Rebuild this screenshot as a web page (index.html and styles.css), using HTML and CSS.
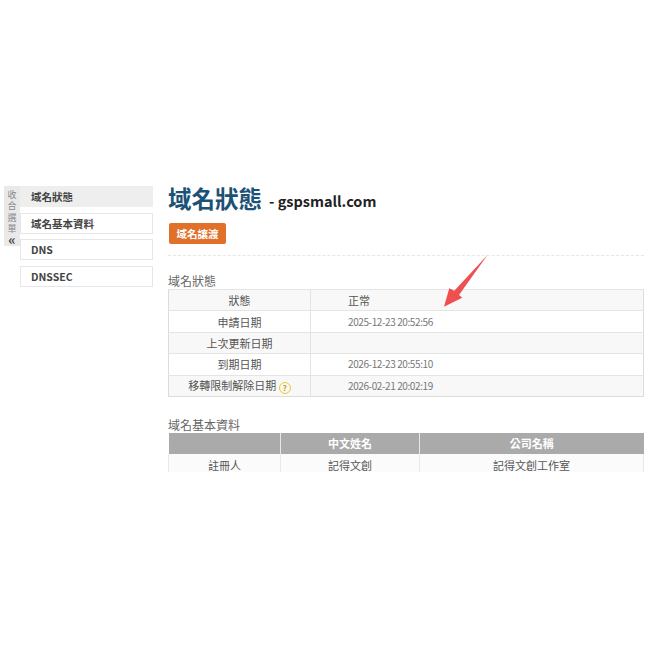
FILE: index.html
```html
<!DOCTYPE html>
<html lang="zh-Hant">

<head>
    <meta charset="UTF-8">
    <meta name="viewport" content="width=device-width, initial-scale=1.0">
    <title>域名狀態</title>
    <link rel="stylesheet" href="styles.css">
</head>

<body>
    <div class="page">
        <div class="toggle">
            <span>收</span>
            <span>合</span>
            <span>選</span>
            <span>單</span>
            <span class="toggle-arrows">«</span>
        </div>

        <ul class="side-menu">
            <li class="active">域名狀態</li>
            <li>域名基本資料</li>
            <li>DNS</li>
            <li>DNSSEC</li>
        </ul>

        <div class="main">
            <div class="title-row">
                <h1>域名狀態</h1>
                <span class="domain">- gspsmall.com</span>
            </div>
            <div class="actions">
                <button class="btn-orange">域名讓渡</button>
            </div>

            <div class="section-label first">域名狀態</div>
            <table class="status-table">
                <tr>
                    <td class="name">狀態</td>
                    <td class="value status-text">正常</td>
                </tr>
                <tr>
                    <td class="name">申請日期</td>
                    <td class="value">2025-12-23 20:52:56</td>
                </tr>
                <tr>
                    <td class="name">上次更新日期</td>
                    <td class="value"></td>
                </tr>
                <tr>
                    <td class="name">到期日期</td>
                    <td class="value">2026-12-23 20:55:10</td>
                </tr>
                <tr>
                    <td class="name">移轉限制解除日期 <span class="help">?</span></td>
                    <td class="value">2026-02-21 20:02:19</td>
                </tr>
            </table>

            <div class="section-label second">域名基本資料</div>
            <div class="info-wrap">
                <table class="info-table">
                    <tr>
                        <th class="col-a"></th>
                        <th class="col-b">中文姓名</th>
                        <th>公司名稱</th>
                    </tr>
                    <tr>
                        <td>註冊人</td>
                        <td>記得文創</td>
                        <td>記得文創工作室</td>
                    </tr>
                </table>
            </div>
        </div>

        <!-- annotation drawn on top of the screenshot -->
        <svg class="arrow" width="60" height="62" viewBox="0 0 60 62">
            <path d="M47.7 0.7 L14.3 36.7 L9.3 34.3 L4 52.7 L22.3 43.7 L19 41 Z" fill="#ee5052" />
        </svg>
    </div>
</body>

</html>
```

FILE: styles.css
```css
* {
    box-sizing: border-box;
}

body {
    margin: 0;
    background-color: #ffffff;
    font-family: "Noto Sans CJK TC", "Noto Sans", sans-serif;
    color: #444;
    font-size: 11px;
}

.page {
    position: relative;
    display: flex;
    align-items: flex-start;
    width: 650px;
    height: 650px;
    padding: 186px 6px 0 4px;
}

.toggle {
    display: flex;
    flex-direction: column;
    align-items: center;
    flex-shrink: 0;
    width: 16px;
    height: 60px;
    background-color: #e9e9e9;
    color: #888;
    font-size: 9px;
    line-height: 11.4px;
    padding-top: 3px;
}

.toggle-arrows {
    font-size: 14px;
    font-weight: 700;
    line-height: 8px;
    color: #444;
}

.side-menu {
    list-style: none;
    margin: 0 15px 0 0;
    padding: 0;
    width: 133px;
    flex-shrink: 0;
}

.side-menu li {
    height: 21px;
    margin-bottom: 5.6px;
    padding-left: 10px;
    border: 1px solid #e6e6e6;
    font-weight: 700;
    font-size: 10.5px;
    line-height: 19px;
    color: #444;
}

.side-menu li.active {
    background-color: #eeeeee;
    border-color: #eeeeee;
}

.main {
    flex: 1;
}

.title-row {
    display: flex;
    align-items: flex-start;
    height: 25px;
    gap: 7px;
}

h1 {
    margin: 0;
    font-size: 23.5px;
    line-height: 24px;
    font-weight: 700;
    color: #1c5276;
}

.domain {
    font-size: 14.5px;
    line-height: 20px;
    font-weight: 700;
    color: #222;
    margin-top: 5px;
}

.actions {
    padding: 12px 0 11px 1px;
    border-bottom: 1px dashed #e6e6e6;
}

.btn-orange {
    display: block;
    width: 57px;
    height: 21px;
    padding: 0;
    border: none;
    border-radius: 2px;
    background-color: #e0702a;
    color: #ffffff;
    font-family: inherit;
    font-size: 10.5px;
    font-weight: 700;
}

.section-label {
    font-size: 12px;
    line-height: 16px;
    color: #666;
}

.section-label.first {
    margin-top: 17px;
}

.section-label.second {
    margin-top: 20px;
}

table {
    width: 100%;
    border-collapse: collapse;
    table-layout: fixed;
}

.status-table {
    border: 1px solid #dcdcdc;
}

.status-table td {
    height: 21.4px;
    padding: 0;
    border-top: 1px solid #e4e4e4;
    line-height: 14px;
}

.status-table tr:nth-child(odd) td {
    background-color: #f8f8f8;
}

.status-table .name {
    width: 142px;
    text-align: center;
    border-right: 1px solid #e4e4e4;
    color: #555;
}

.status-table .value {
    padding-left: 37px;
    font-size: 10px;
    letter-spacing: -0.4px;
    color: #777;
}

.status-table .status-text {
    font-size: 11px;
    letter-spacing: 0;
    color: #555;
}

.help {
    display: inline-block;
    width: 12px;
    height: 12px;
    border: 1.5px solid #eccb2c;
    border-radius: 50%;
    color: #c9a012;
    font-size: 8px;
    font-weight: 700;
    line-height: 9px;
    text-align: center;
    vertical-align: -1px;
}

.info-wrap {
    height: 39px;
    overflow: hidden;
}

.info-table th {
    height: 21px;
    padding: 0;
    background-color: #aaaaaa;
    color: #ffffff;
    font-size: 11px;
    font-weight: 700;
    border-right: 1px solid #e8e8e8;
}

.info-table th:last-child {
    border-right: none;
}

.info-table .col-a {
    width: 112px;
}

.info-table .col-b {
    width: 139px;
}

.info-table td {
    height: 21px;
    padding: 0;
    text-align: center;
    color: #555;
    background-color: #fbfbfb;
    border-right: 1px solid #e8e8e8;
    vertical-align: top;
    line-height: 22px;
}

.info-table td:first-child {
    border-left: 1px solid #e8e8e8;
}

.arrow {
    position: absolute;
    left: 440px;
    top: 254px;
}
```
